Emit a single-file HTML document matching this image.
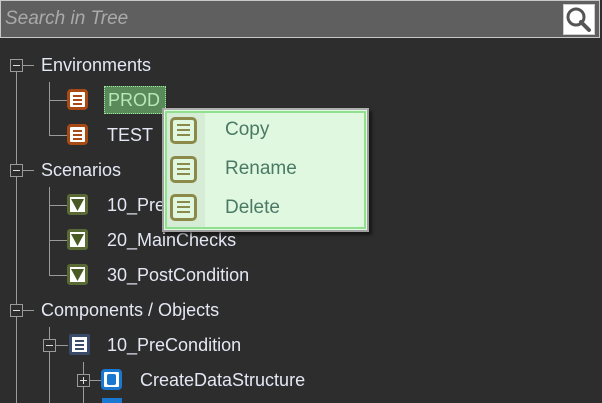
<!DOCTYPE html><html><head><style>
body{margin:0;width:602px;height:403px;background:#2d2d2d;overflow:hidden;position:relative;font-family:"Liberation Sans",sans-serif;}
.a{position:absolute}
.t{position:absolute;color:#e4e8f4;font-size:18px;line-height:20px;white-space:nowrap}
.ln{position:absolute;background:#9a9a9a}
.bx{position:absolute;width:11px;height:11px;border:1px solid #9a9a9a;background:#2d2d2d}
.bx:before{content:"";position:absolute;left:2px;top:5px;width:7px;height:1px;background:#ddd}
.pl:after{content:"";position:absolute;left:5px;top:2px;width:1px;height:7px;background:#ddd}
.ic{position:absolute;width:15px;height:15px;border:3px solid;border-radius:4px;background:#fff}
.ic i{position:absolute;left:3px;width:9px;height:2px;background:currentColor}
.mi{position:absolute;left:170px;width:21px;height:21px;border:3px solid #8c8a4a;border-radius:5px;background:#e0f8e0;color:#8c8a4a}
.mi i{position:absolute;left:4px;width:13px;height:2px;background:#8c8a4a}
.mt{position:absolute;left:225px;color:#4a7a66;font-size:19px;line-height:20px}
</style></head><body>
<div class="a" style="left:0;top:0;width:600px;height:38px;background:#5f5f5f;border:1px solid #c8c8c8;box-sizing:border-box"></div>
<div class="a" style="left:5px;top:8px;color:#aaa;font-style:italic;font-size:19px">Search in Tree</div>
<div class="a" style="left:563px;top:4px;width:32px;height:31px;background:#fff;border:1px solid #ccc;box-sizing:border-box">
<svg width="30" height="29" viewBox="0 0 30 29"><circle cx="12" cy="12" r="8" fill="none" stroke="#555" stroke-width="3"/><path d="M17 17l8 8" stroke="#555" stroke-width="4" stroke-linecap="round"/></svg></div>

<div class="ln" style="left:16px;top:71px;width:1px;height:332px"></div>
<div class="ln" style="left:22px;top:65px;width:12px;height:1px"></div>
<div class="ln" style="left:22px;top:170px;width:12px;height:1px"></div>
<div class="ln" style="left:22px;top:310px;width:12px;height:1px"></div>
<div class="ln" style="left:49px;top:82px;width:1px;height:53px"></div>
<div class="ln" style="left:49px;top:100px;width:18px;height:1px"></div>
<div class="ln" style="left:49px;top:135px;width:18px;height:1px"></div>
<div class="ln" style="left:49px;top:187px;width:1px;height:88px"></div>
<div class="ln" style="left:49px;top:205px;width:18px;height:1px"></div>
<div class="ln" style="left:49px;top:240px;width:18px;height:1px"></div>
<div class="ln" style="left:49px;top:275px;width:18px;height:1px"></div>
<div class="ln" style="left:49px;top:327px;width:1px;height:76px"></div>
<div class="ln" style="left:55px;top:345px;width:13px;height:1px"></div>
<div class="ln" style="left:83px;top:362px;width:1px;height:41px"></div>
<div class="ln" style="left:89px;top:380px;width:12px;height:1px"></div>

<div class="bx" style="left:10px;top:59px"></div>
<div class="bx" style="left:10px;top:164px"></div>
<div class="bx" style="left:10px;top:304px"></div>
<div class="bx" style="left:43px;top:339px"></div>
<div class="bx pl" style="left:77px;top:374px"></div>

<div class="t" style="left:41px;top:55px">Environments</div>
<div class="t" style="left:41px;top:160px">Scenarios</div>
<div class="t" style="left:41px;top:300px">Components / Objects</div>

<div class="ic" style="left:67px;top:89px;color:#a84a14;border-color:#a84a14"><i style="top:3px"></i><i style="top:7px"></i><i style="top:11px"></i></div>
<div class="a" style="left:104px;top:86px;width:62px;height:28px;background:#5a8a5a;border:1px dotted #9ee89e;box-sizing:border-box"></div>
<div class="t" style="left:108px;top:90px;color:#b8e8b8">PROD</div>
<div class="ic" style="left:67px;top:124px;color:#a84a14;border-color:#a84a14"><i style="top:3px"></i><i style="top:7px"></i><i style="top:11px"></i></div>
<div class="t" style="left:107px;top:125px">TEST</div>

<div class="ic" style="left:67px;top:194px;border-color:#5a6a34;border-radius:3px"><svg class="a" style="left:1px;top:2px" width="13" height="12"><path d="M0 0H13L6.5 12Z" fill="#4a5a24"/></svg></div>
<div class="t" style="left:107px;top:195px">10_PreCondition</div>
<div class="ic" style="left:67px;top:229px;border-color:#5a6a34;border-radius:3px"><svg class="a" style="left:1px;top:2px" width="13" height="12"><path d="M0 0H13L6.5 12Z" fill="#4a5a24"/></svg></div>
<div class="t" style="left:107px;top:230px">20_MainChecks</div>
<div class="ic" style="left:67px;top:264px;border-color:#5a6a34;border-radius:3px"><svg class="a" style="left:1px;top:2px" width="13" height="12"><path d="M0 0H13L6.5 12Z" fill="#4a5a24"/></svg></div>
<div class="t" style="left:107px;top:265px">30_PostCondition</div>

<div class="ic" style="left:69px;top:334px;color:#3a4a6a;border-color:#3a4a6a;border-radius:2px"><i style="top:3px"></i><i style="top:7px"></i><i style="top:11px"></i></div>
<div class="t" style="left:107px;top:335px">10_PreCondition</div>
<div class="ic" style="left:101px;top:369px;border-color:#1a78d0;border-radius:4px"><div class="a" style="left:3px;top:2px;width:9px;height:11px;background:#1a78d0;border-radius:2px"></div></div>
<div class="t" style="left:140px;top:370px">CreateDataStructure</div>
<div class="a" style="left:102px;top:398px;width:20px;height:5px;background:#1a78d0"></div>

<div class="a" style="left:162px;top:108px;width:207px;height:124px;background:#e0f8e0;border:2px solid #a0a0a0;border-top-color:#b0b0b0;box-sizing:border-box;box-shadow:3px 3px 3px rgba(0,0,0,.5)"></div>
<div class="a" style="left:165px;top:111px;width:201px;height:118px;border:2px solid #90e090;box-sizing:border-box"></div>
<div class="a" style="left:167px;top:113px;width:38px;height:114px;background:#d6ecd6"></div>
<div class="mi" style="top:117px"><i style="top:4px"></i><i style="top:9px"></i><i style="top:14px"></i></div>
<div class="mt" style="top:120px">Copy</div>
<div class="mi" style="top:156px"><i style="top:4px"></i><i style="top:9px"></i><i style="top:14px"></i></div>
<div class="mt" style="top:159px">Rename</div>
<div class="mi" style="top:194px"><i style="top:4px"></i><i style="top:9px"></i><i style="top:14px"></i></div>
<div class="mt" style="top:198px">Delete</div>
</body></html>
